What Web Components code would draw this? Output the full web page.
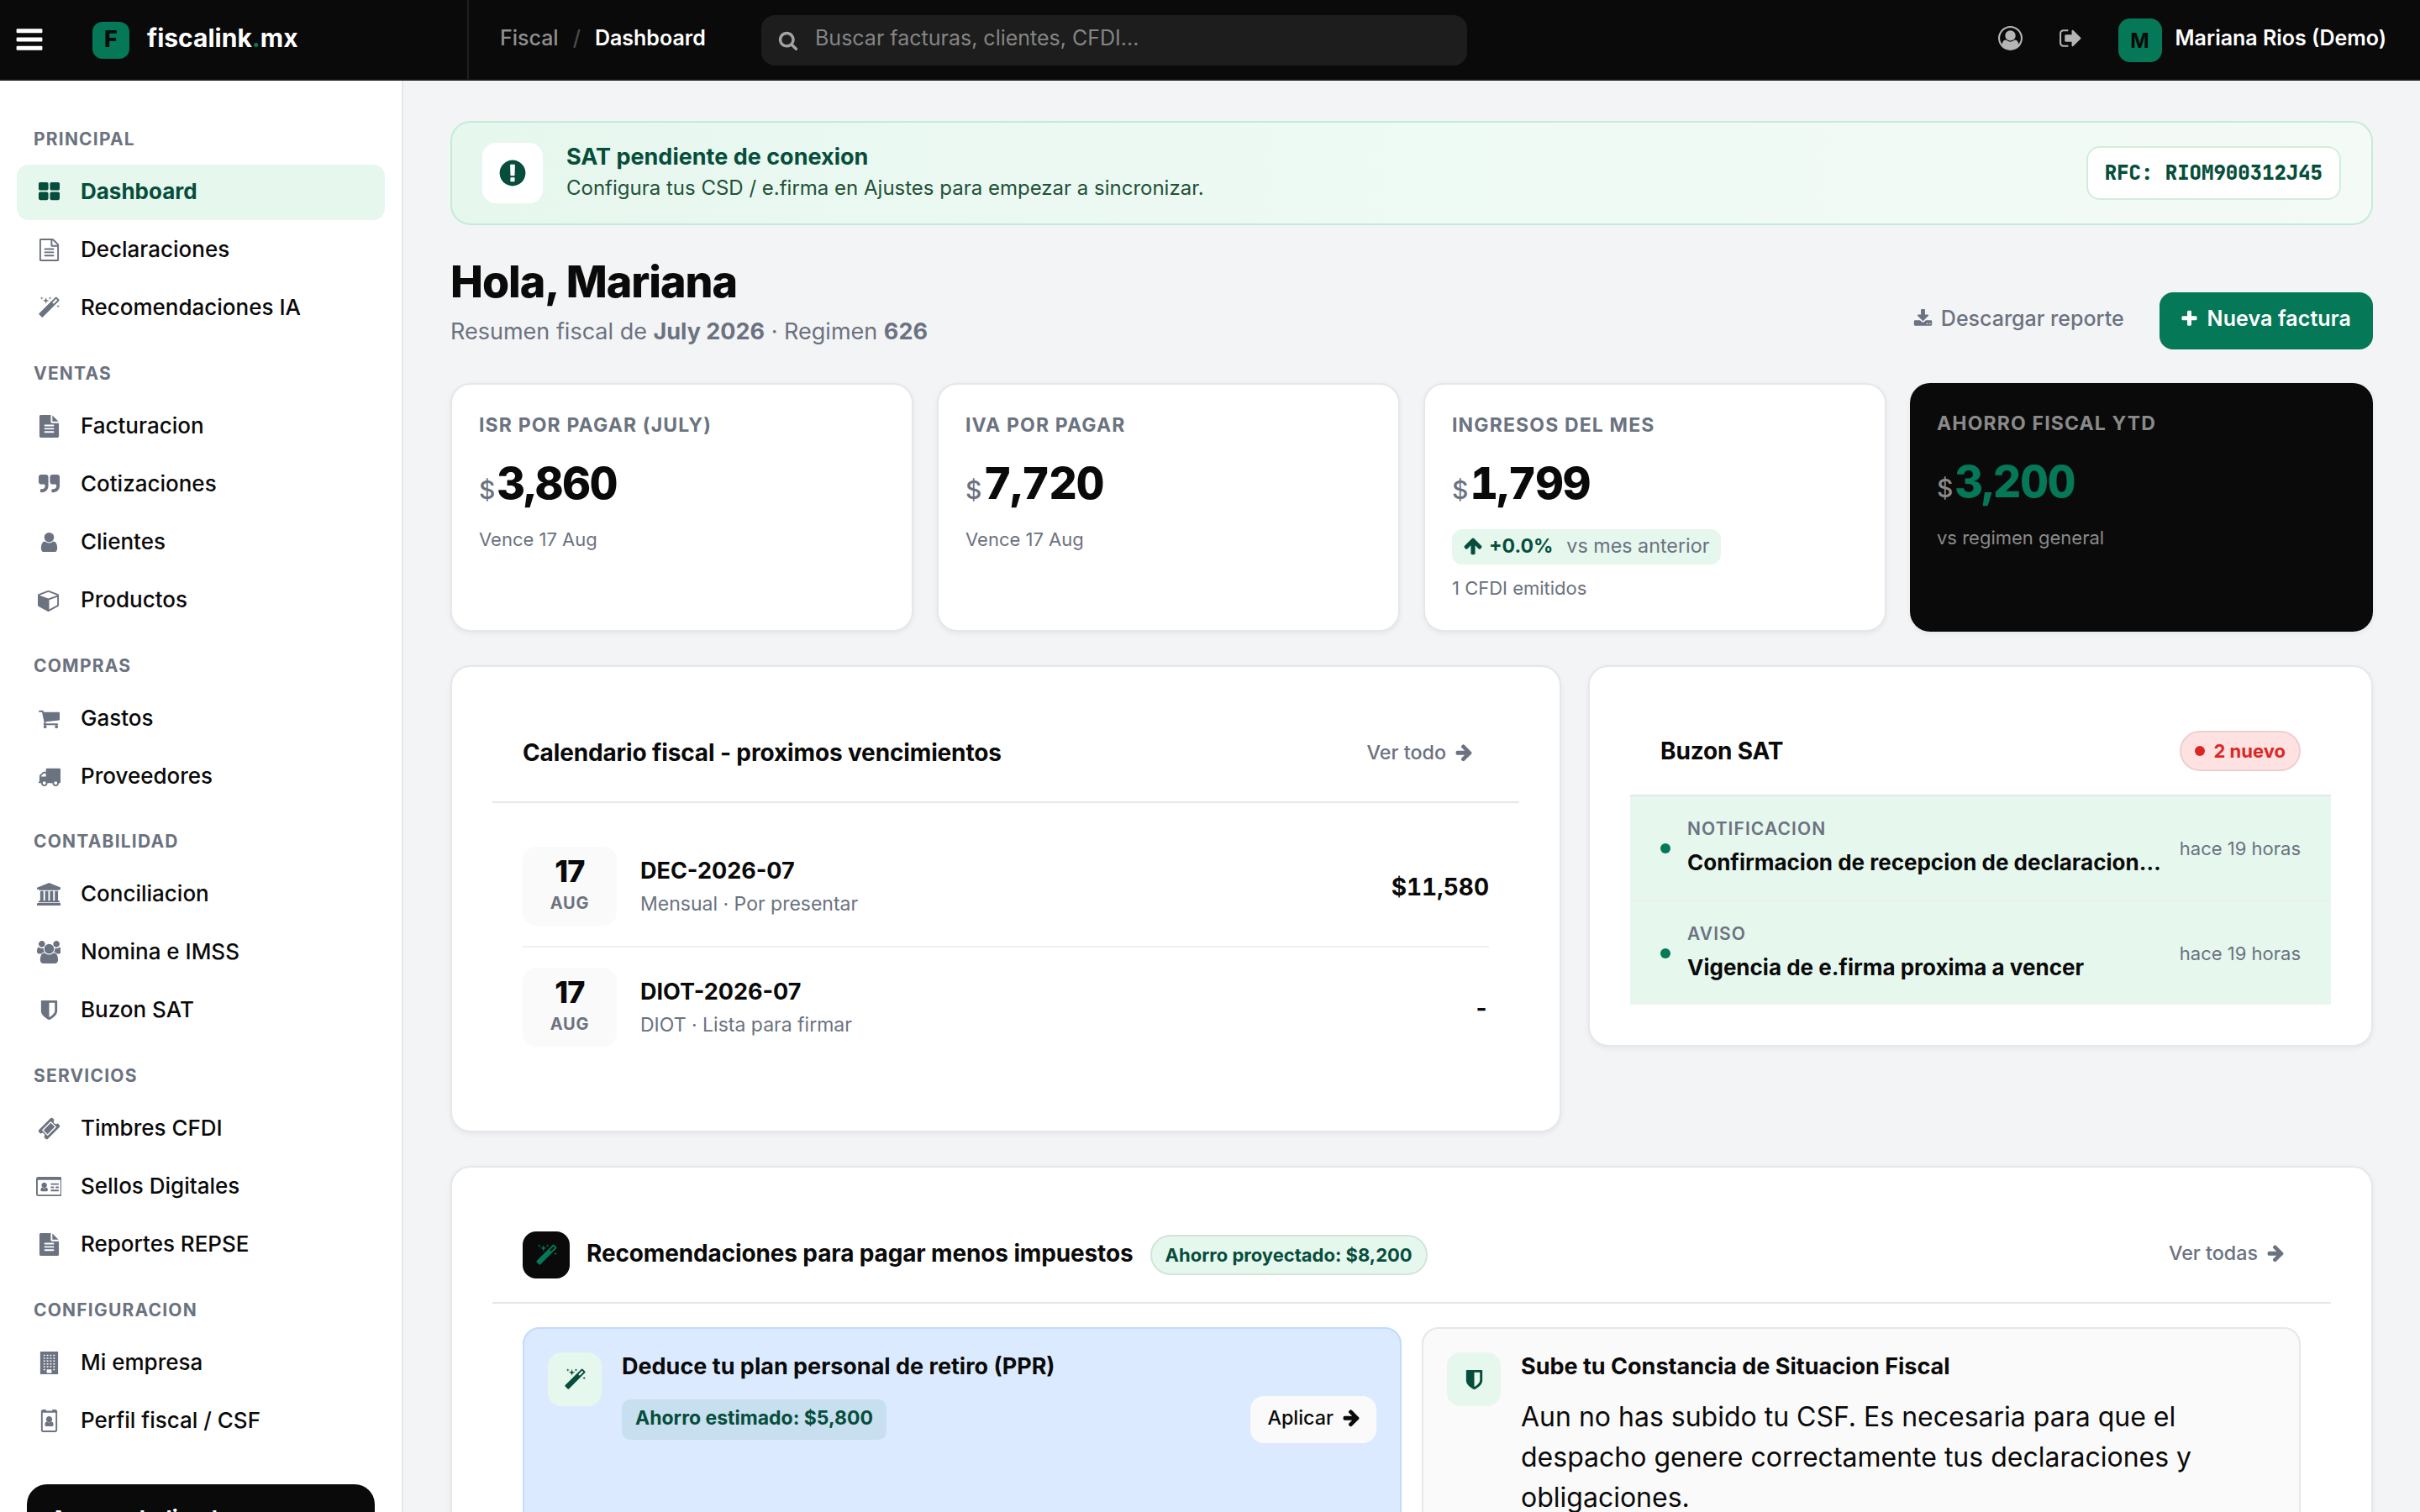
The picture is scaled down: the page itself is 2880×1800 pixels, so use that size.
<!DOCTYPE html>
<html lang="es">
<head>
<meta charset="utf-8">
<title>fiscalink.mx - Dashboard</title>
<style>
    :root {
        --ink: #0a0a0a;
        --muted: #6b7280;
        --line: #e5e7eb;
        --green: #047857;
        --green-dark: #064e3b;
        --green-soft: #e6f7ee;
    }
    html, body {
        margin: 0;
        height: 1800px;
        overflow: hidden;
    }
    body {
        font-family: Inter, "Liberation Sans", sans-serif;
        color: var(--ink);
        background: #f3f4f6;
    }
</style>
</head>
<body>
<app-shell>
    <app-header slot="header" user="Mariana Rios (Demo)" initial="M"></app-header>

    <app-sidebar slot="sidebar">
        <nav-section label="Principal">
            <nav-item icon="th-large" active>Dashboard</nav-item>
            <nav-item icon="file-text-o">Declaraciones</nav-item>
            <nav-item icon="magic">Recomendaciones IA</nav-item>
        </nav-section>
        <nav-section label="Ventas">
            <nav-item icon="file-text">Facturacion</nav-item>
            <nav-item icon="quote-right">Cotizaciones</nav-item>
            <nav-item icon="user">Clientes</nav-item>
            <nav-item icon="cube">Productos</nav-item>
        </nav-section>
        <nav-section label="Compras">
            <nav-item icon="shopping-cart">Gastos</nav-item>
            <nav-item icon="truck">Proveedores</nav-item>
        </nav-section>
        <nav-section label="Contabilidad">
            <nav-item icon="university">Conciliacion</nav-item>
            <nav-item icon="users">Nomina e IMSS</nav-item>
            <nav-item icon="shield">Buzon SAT</nav-item>
        </nav-section>
        <nav-section label="Servicios">
            <nav-item icon="ticket">Timbres CFDI</nav-item>
            <nav-item icon="id-card">Sellos Digitales</nav-item>
            <nav-item icon="file-text">Reportes REPSE</nav-item>
        </nav-section>
        <nav-section label="Configuracion">
            <nav-item icon="building">Mi empresa</nav-item>
            <nav-item icon="id-badge">Perfil fiscal / CSF</nav-item>
        </nav-section>
        <advisor-card slot="footer">Asesor dedicado</advisor-card>
    </app-sidebar>

    <sat-banner rfc="RFC: RIOM900312J45">
        <span slot="title">SAT pendiente de conexion</span>
        Configura tus CSD / e.firma en Ajustes para empezar a sincronizar.
    </sat-banner>

    <page-head>
        <span slot="title">Hola, Mariana</span>
        Resumen fiscal de <b>July 2026</b> · Regimen <b>626</b>
        <ui-button slot="actions" icon="download" variant="ghost">Descargar reporte</ui-button>
        <ui-button slot="actions" icon="plus" variant="primary">Nueva factura</ui-button>
    </page-head>

    <kpi-grid>
        <kpi-card label="ISR por pagar (July)" value="3,860">Vence 17 Aug</kpi-card>
        <kpi-card label="IVA por pagar" value="7,720">Vence 17 Aug</kpi-card>
        <kpi-card label="Ingresos del mes" value="1,799" delta="+0.0%" delta-note="vs mes anterior">1 CFDI emitidos</kpi-card>
        <kpi-card label="Ahorro fiscal YTD" value="3,200" dark>vs regimen general</kpi-card>
    </kpi-grid>

    <panel-row>
        <ui-panel>
            <span slot="title">Calendario fiscal - proximos vencimientos</span>
            <ui-button slot="action" icon-after="arrow-right" variant="link">Ver todo</ui-button>
            <deadline-list>
                <deadline-row day="17" month="Aug" amount="$11,580">
                    <span slot="title">DEC-2026-07</span>Mensual · Por presentar
                </deadline-row>
                <deadline-row day="17" month="Aug" amount="-" last>
                    <span slot="title">DIOT-2026-07</span>DIOT · Lista para firmar
                </deadline-row>
            </deadline-list>
        </ui-panel>
        <ui-panel compact>
            <span slot="title">Buzon SAT</span>
            <ui-badge slot="action" variant="danger" dot>2 nuevo</ui-badge>
            <mail-item kind="Notificacion" time="hace 19 horas">Confirmacion de recepcion de declaracion…</mail-item>
            <mail-item kind="Aviso" time="hace 19 horas" last>Vigencia de e.firma proxima a vencer</mail-item>
        </ui-panel>
    </panel-row>

    <ui-panel icon="magic">
        <span slot="title">Recomendaciones para pagar menos impuestos</span>
        <ui-badge slot="badge">Ahorro proyectado: $8,200</ui-badge>
        <ui-button slot="action" icon-after="arrow-right" variant="link">Ver todas</ui-button>
        <reco-grid>
            <reco-card icon="magic" variant="info" saving="Ahorro estimado: $5,800" action="Aplicar">
                <span slot="title">Deduce tu plan personal de retiro (PPR)</span>
            </reco-card>
            <reco-card icon="shield">
                <span slot="title">Sube tu Constancia de Situacion Fiscal</span>
                Aun no has subido tu CSF. Es necesaria para que el despacho genere correctamente tus declaraciones y obligaciones.
            </reco-card>
        </reco-grid>
    </ui-panel>
</app-shell>

<script>
// name: [view box width, path]; every icon is 1792 units tall
const ICONS = {
    'bars': [1792, 'M1664 1344v128q0 26-19 45t-45 19h-1408q-26 0-45-19t-19-45v-128q0-26 19-45t45-19h1408q26 0 45 19t19 45zm0-512v128q0 26-19 45t-45 19h-1408q-26 0-45-19t-19-45v-128q0-26 19-45t45-19h1408q26 0 45 19t19 45zm0-512v128q0 26-19 45t-45 19h-1408q-26 0-45-19t-19-45v-128q0-26 19-45t45-19h1408q26 0 45 19t19 45z'],
    'search': [1792, 'M1216 832q0-185-131.5-316.5t-316.5-131.5-316.5 131.5-131.5 316.5 131.5 316.5 316.5 131.5 316.5-131.5 131.5-316.5zm512 832q0 52-38 90t-90 38q-54 0-90-38l-343-342q-179 124-399 124-143 0-273.5-55.5t-225-150-150-225-55.5-273.5 55.5-273.5 150-225 225-150 273.5-55.5 273.5 55.5 225 150 150 225 55.5 273.5q0 220-124 399l343 343q37 37 37 90z'],
    'user-circle': [1792, 'M896 0q182 0 348 71t286 191 191 286 71 348q0 181-70.5 347t-190.5 286-286 191.5-349 71.5-349-71-285.5-191.5-190.5-286-71-347.5 71-348 191-286 286-191 348-71zm619 1351q149-205 149-455 0-156-61-298t-164-245-245-164-298-61-298 61-245 164-164 245-61 298q0 250 149 455 66-327 306-327 131 128 313 128t313-128q240 0 306 327zm-235-647q0-159-112.5-271.5t-271.5-112.5-271.5 112.5-112.5 271.5 112.5 271.5 271.5 112.5 271.5-112.5 112.5-271.5z'],
    'sign-out': [1792, 'M704 1440q0 4 1 20t.5 26.5-3 23.5-10 19.5-20.5 6.5h-320q-119 0-203.5-84.5t-84.5-203.5v-704q0-119 84.5-203.5t203.5-84.5h320q13 0 22.5 9.5t9.5 22.5q0 4 1 20t.5 26.5-3 23.5-10 19.5-20.5 6.5h-320q-66 0-113 47t-47 113v704q0 66 47 113t113 47h312l11.5 1 11.5 3 8 5.5 7 9 2 13.5zm928-544q0 26-19 45l-544 544q-19 19-45 19t-45-19-19-45v-288h-448q-26 0-45-19t-19-45v-384q0-26 19-45t45-19h448v-288q0-26 19-45t45-19 45 19l544 544q19 19 19 45z'],
    'th-large': [1792, 'M832 1024v384q0 52-38 90t-90 38h-512q-52 0-90-38t-38-90v-384q0-52 38-90t90-38h512q52 0 90 38t38 90zm0-768v384q0 52-38 90t-90 38h-512q-52 0-90-38t-38-90v-384q0-52 38-90t90-38h512q52 0 90 38t38 90zm896 768v384q0 52-38 90t-90 38h-512q-52 0-90-38t-38-90v-384q0-52 38-90t90-38h512q52 0 90 38t38 90zm0-768v384q0 52-38 90t-90 38h-512q-52 0-90-38t-38-90v-384q0-52 38-90t90-38h512q52 0 90 38t38 90z'],
    'file-text-o': [1792, 'M1596 380q28 28 48 76t20 88v1152q0 40-28 68t-68 28h-1344q-40 0-68-28t-28-68v-1600q0-40 28-68t68-28h896q40 0 88 20t76 48zm-444-244v376h376q-10-29-22-41l-313-313q-12-12-41-22zm384 1528v-1024h-416q-40 0-68-28t-28-68v-416h-768v1536h1280zm-1024-864q0-14 9-23t23-9h704q14 0 23 9t9 23v64q0 14-9 23t-23 9h-704q-14 0-23-9t-9-23v-64zm736 224q14 0 23 9t9 23v64q0 14-9 23t-23 9h-704q-14 0-23-9t-9-23v-64q0-14 9-23t23-9h704zm0 256q14 0 23 9t9 23v64q0 14-9 23t-23 9h-704q-14 0-23-9t-9-23v-64q0-14 9-23t23-9h704z'],
    'file-text': [1792, 'M1596 476q14 14 28 36h-472v-472q22 14 36 28zm-476 164h544v1056q0 40-28 68t-68 28h-1344q-40 0-68-28t-28-68v-1600q0-40 28-68t68-28h800v544q0 40 28 68t68 28zm160 736v-64q0-14-9-23t-23-9h-704q-14 0-23 9t-9 23v64q0 14 9 23t23 9h704q14 0 23-9t9-23zm0-256v-64q0-14-9-23t-23-9h-704q-14 0-23 9t-9 23v64q0 14 9 23t23 9h704q14 0 23-9t9-23zm0-256v-64q0-14-9-23t-23-9h-704q-14 0-23 9t-9 23v64q0 14 9 23t23 9h704q14 0 23-9t9-23z'],
    'magic': [1792, 'M1254 581l293-293-107-107-293 293zm447-293q0 27-18 45l-1286 1286q-18 18-45 18t-45-18l-198-198q-18-18-18-45t18-45l1286-1286q18-18 45-18t45 18l198 198q18 18 18 45zm-1351-190l98 30-98 30-30 98-30-98-98-30 98-30 30-98zm350 162l196 60-196 60-60 196-60-196-196-60 196-60 60-196zm930 478l98 30-98 30-30 98-30-98-98-30 98-30 30-98zm-640-640l98 30-98 30-30 98-30-98-98-30 98-30 30-98z'],
    'quote-right': [1792, 'M832 320v704q0 104-40.5 198.5t-109.5 163.5-163.5 109.5-198.5 40.5h-64q-26 0-45-19t-19-45v-128q0-26 19-45t45-19h64q106 0 181-75t75-181v-32q0-40-28-68t-68-28h-224q-80 0-136-56t-56-136v-384q0-80 56-136t136-56h384q80 0 136 56t56 136zm896 0v704q0 104-40.5 198.5t-109.5 163.5-163.5 109.5-198.5 40.5h-64q-26 0-45-19t-19-45v-128q0-26 19-45t45-19h64q106 0 181-75t75-181v-32q0-40-28-68t-68-28h-224q-80 0-136-56t-56-136v-384q0-80 56-136t136-56h384q80 0 136 56t56 136z'],
    'user': [1792, 'M1536 1399q0 109-62.5 187t-150.5 78h-854q-88 0-150.5-78t-62.5-187q0-85 8.5-160.5t31.5-152 58.5-131 94-89 134.5-34.5q131 128 313 128t313-128q76 0 134.5 34.5t94 89 58.5 131 31.5 152 8.5 160.5zm-256-887q0 159-112.5 271.5t-271.5 112.5-271.5-112.5-112.5-271.5 112.5-271.5 271.5-112.5 271.5 112.5 112.5 271.5z'],
    'cube': [1792, 'M896 1629l640-349v-636l-640 233v752zm-64-865l698-254-698-254-698 254zm832-252v768q0 35-18 65t-49 47l-704 384q-28 16-61 16t-61-16l-704-384q-31-17-49-47t-18-65v-768q0-40 23-73t61-47l704-256q22-8 44-8t44 8l704 256q38 14 61 47t23 73z'],
    'shopping-cart': [1792, 'M704 1536q0 52-38 90t-90 38-90-38-38-90 38-90 90-38 90 38 38 90zm896 0q0 52-38 90t-90 38-90-38-38-90 38-90 90-38 90 38 38 90zm128-1088v512q0 24-16.5 42.5t-40.5 21.5l-1044 122q13 60 13 70 0 16-24 64h920q26 0 45 19t19 45-19 45-45 19h-1024q-26 0-45-19t-19-45q0-11 8-31.5t16-36 21.5-40 15.5-29.5l-177-823h-204q-26 0-45-19t-19-45 19-45 45-19h256q16 0 28.5 6.5t19.5 15.5 13 24.5 8 26 5.5 29.5 4.5 26h1201q26 0 45 19t19 45z'],
    'truck': [1792, 'M640 1408q0-52-38-90t-90-38-90 38-38 90 38 90 90 38 90-38 38-90zm-384-512h384v-256h-158q-13 0-22 9l-195 195q-9 9-9 22v30zm1280 512q0-52-38-90t-90-38-90 38-38 90 38 90 90 38 90-38 38-90zm256-1088v1024q0 15-4 26.5t-13.5 18.5-16.5 11.5-23.5 6-22.5 2-25.5 0-22.5-.5q0 106-75 181t-181 75-181-75-75-181h-384q0 106-75 181t-181 75-181-75-75-181h-64q-3 0-22.5.5t-25.5 0-22.5-2-23.5-6-16.5-11.5-13.5-18.5-4-26.5q0-26 19-45t45-19v-320q0-8-.5-35t0-38 2.5-34.5 6.5-37 14-30.5 22.5-30l198-198q19-19 50.5-32t58.5-13h160v-192q0-26 19-45t45-19h1024q26 0 45 19t19 45z'],
    'university': [1920, 'M960 0l960 384v128h-128q0 26-20.5 45t-48.5 19h-1526q-28 0-48.5-19t-20.5-45h-128v-128zm-704 640h256v768h128v-768h256v768h128v-768h256v768h128v-768h256v768h59q28 0 48.5 19t20.5 45v64h-1664v-64q0-26 20.5-45t48.5-19h59v-768zm1595 960q28 0 48.5 19t20.5 45v128h-1920v-128q0-26 20.5-45t48.5-19h1782z'],
    'users': [1920, 'M593 896q-162 5-265 128h-134q-82 0-138-40.5t-56-118.5q0-353 124-353 6 0 43.5 21t97.5 42.5 119 21.5q67 0 133-23-5 37-5 66 0 159 90 256zm1071 637q0 120-73 189.5t-194 69.5h-874q-121 0-194-69.5t-73-189.5q0-53 3.5-103.5t14-109 26.5-108.5 43-97.5 62-81 85.5-53.5 111.5-20q10 0 43 21.5t73 48 107 48 135 21.5 135-21.5 107-48 73-48 43-21.5q61 0 111.5 20t85.5 53.5 62 81 43 97.5 26.5 108.5 14 109 3.5 103.5zm-1024-1277q0 106-75 181t-181 75-181-75-75-181 75-181 181-75 181 75 75 181zm704 384q0 159-112.5 271.5t-271.5 112.5-271.5-112.5-112.5-271.5 112.5-271.5 271.5-112.5 271.5 112.5 112.5 271.5zm576 225q0 78-56 118.5t-138 40.5h-134q-103-123-265-128 90-97 90-256 0-29-5-66 66 23 133 23 59 0 119-21.5t97.5-42.5 43.5-21q124 0 124 353zm-128-609q0 106-75 181t-181 75-181-75-75-181 75-181 181-75 181 75 75 181z'],
    'shield': [1792, 'M1344 960v-640h-448v1137q119-63 213-137 235-184 235-360zm192-768v768q0 86-33.5 170.5t-83 150-118 127.5-126.5 103-121 77.5-89.5 49.5-42.5 20q-12 6-26 6t-26-6q-16-7-42.5-20t-89.5-49.5-121-77.5-126.5-103-118-127.5-83-150-33.5-170.5v-768q0-26 19-45t45-19h1152q26 0 45 19t19 45z'],
    'ticket': [1792, 'M1024 452l316 316-572 572-316-316zm-211 979l618-618q19-19 19-45t-19-45l-362-362q-18-18-45-18t-45 18l-618 618q-19 19-19 45t19 45l362 362q18 18 45 18t45-18zm889-637l-907 908q-37 37-90.5 37t-90.5-37l-126-126q56-56 56-136t-56-136-136-56-136 56l-125-126q-37-37-37-90.5t37-90.5l907-906q37-37 90.5-37t90.5 37l125 125q-56 56-56 136t56 136 136 56 136-56l126 125q37 37 37 90.5t-37 90.5z'],
    'id-card': [2048, 'M160 128h1728q66 0 113 47t47 113v1216q0 66-47 113t-113 47h-1728q-66 0-113-47t-47-113v-1216q0-66 47-113t113-47zm-32 256v1120q0 32 32 32h1728q32 0 32-32v-1120zm512 192q90 0 153 63t63 153-63 153-153 63-153-63-63-153 63-153 153-63zm-150 400q66 60 150 60t150-60q134 10 134 210 0 94-80 94h-408q-80 0-80-94 0-200 134-210zm694-336h576q32 0 32 32v64q0 32-32 32h-576q-32 0-32-32v-64q0-32 32-32zm0 256h192q32 0 32 32v64q0 32-32 32h-192q-32 0-32-32v-64q0-32 32-32zm384 0h192q32 0 32 32v64q0 32-32 32h-192q-32 0-32-32v-64q0-32 32-32zm-384 256h576q32 0 32 32v64q0 32-32 32h-576q-32 0-32-32v-64q0-32 32-32z'],
    'building': [1792, buildingPath()],
    'id-badge': [1792, 'M416 0h224v64q0 32 32 32h448q32 0 32-32v-64h224q66 0 113 47t47 113v1472q0 66-47 113t-113 47h-960q-66 0-113-47t-47-113v-1472q0-66 47-113t113-47zm-32 256v1376q0 32 32 32h960q32 0 32-32v-1376zm512 272q100 0 170 70t70 170-70 170-170 70-170-70-70-170 70-170 170-70zm-170 440q76 64 170 64t170-64q170 10 170 240 0 120-100 120h-480q-100 0-100-120 0-230 170-240z'],
    'exclamation-circle': [1792, 'M896 128q209 0 385.5 103t279.5 279.5 103 385.5-103 385.5-279.5 279.5-385.5 103-385.5-103-279.5-279.5-103-385.5 103-385.5 279.5-279.5 385.5-103zm128 1247v-190q0-14-9-23.5t-22-9.5h-192q-13 0-23 10t-10 23v190q0 13 10 23t23 10h192q13 0 22-9.5t9-23.5zm-2-344l18-621q0-12-10-18-10-8-24-8h-220q-14 0-24 8-10 6-10 18l17 621q0 10 10 17.5t24 7.5h185q14 0 23.5-7.5t10.5-17.5z'],
    'download': [1792, 'M1344 1344q0-26-19-45t-45-19-45 19-19 45 19 45 45 19 45-19 19-45zm256 0q0-26-19-45t-45-19-45 19-19 45 19 45 45 19 45-19 19-45zm128-224v320q0 40-28 68t-68 28h-1472q-40 0-68-28t-28-68v-320q0-40 28-68t68-28h465l135 136q58 56 136 56t136-56l136-136h464q40 0 68 28t28 68zm-325-569q17 41-14 70l-448 448q-18 19-45 19t-45-19l-448-448q-31-29-14-70 17-39 59-39h256v-448q0-26 19-45t45-19h256q26 0 45 19t19 45v448h256q42 0 59 39z'],
    'plus': [1792, 'M1600 736v192q0 40-28 68t-68 28h-416v416q0 40-28 68t-68 28h-192q-40 0-68-28t-28-68v-416h-416q-40 0-68-28t-28-68v-192q0-40 28-68t68-28h416v-416q0-40 28-68t68-28h192q40 0 68 28t28 68v416h416q40 0 68 28t28 68z'],
    'arrow-up': [1792, 'M1675 971q0 51-37 90l-75 75q-38 38-91 38-54 0-90-38l-294-293v704q0 52-37.5 84.5t-90.5 32.5h-128q-53 0-90.5-32.5t-37.5-84.5v-704l-294 293q-36 38-90 38t-90-38l-75-75q-38-38-38-90 0-53 38-91l651-651q35-37 90-37 54 0 91 37l651 651q37 39 37 91z'],
    'arrow-right': [1792, 'M1600 960q0 54-37 91l-651 651q-39 37-91 37-51 0-90-37l-75-75q-38-38-38-91t38-91l293-293h-704q-52 0-84.5-37.5t-32.5-90.5v-128q0-53 32.5-90.5t84.5-37.5h704l-293-294q-38-36-38-90t38-90l75-75q38-38 90-38 53 0 91 38l651 651q37 35 37 90z']
};

// Facade with a grid of windows and a door
function buildingPath() {
    let d = 'M192 0h1408v1792h-1408z';
    for (let row = 0; row < 6; row++) {
        for (let col = 0; col < 4; col++) {
            if (row === 5 && (col === 1 || col === 2)) continue;
            d += `M${448 + col * 256} ${256 + row * 224}h128v96h-128z`;
        }
    }
    return d + 'M704 1408h384v288h-384z';
}

class BaseElement extends HTMLElement {
    constructor() {
        super();
        this.attachShadow({ mode: 'open' });
    }

    connectedCallback() {
        this.shadowRoot.innerHTML = `<style>:host { display: block; box-sizing: border-box; } * { box-sizing: border-box; } ${this.styles()}</style>${this.markup()}`;
    }

    styles() { return ''; }
    markup() { return '<slot></slot>'; }

    attr(name) {
        return this.getAttribute(name) || '';
    }
}

class FlIcon extends BaseElement {
    styles() {
        return `
            :host { display: inline-flex; flex: none; line-height: 1; }
            svg { display: block; height: 1em; width: auto; fill: currentColor; fill-rule: evenodd; }
        `;
    }

    markup() {
        const [width, path] = ICONS[this.attr('name')];
        return `<svg viewBox="0 0 ${width} 1792" aria-hidden="true"><path d="${path}"/></svg>`;
    }
}

class AppShell extends BaseElement {
    styles() {
        return `
            :host { display: grid; grid-template: 96px 1704px / 480px 2400px; height: 1800px; }
            .top { grid-column: 1 / 3; }
            main { padding: 48px 56px 0; overflow: hidden; }
        `;
    }

    markup() {
        return `
            <div class="top"><slot name="header"></slot></div>
            <slot name="sidebar"></slot>
            <main><slot></slot></main>
        `;
    }
}

class AppHeader extends BaseElement {
    styles() {
        return `
            :host { display: flex; align-items: stretch; height: 96px; background: #0a0a0a; border-bottom: 2px solid #1a1614; color: #fff; }
            .brand { display: flex; align-items: center; width: 558px; padding: 2px 0 0 17px; border-right: 2px solid #1f1f1f; }
            .menu { margin-bottom: 3px; font-size: 36px; }
            .logo { display: flex; align-items: center; justify-content: center; width: 44px; height: 44px; margin-left: 57px; padding-bottom: 3px; border-radius: 12px; background: #047857; color: #0a0a0a; font-size: 27px; font-weight: 800; }
            .name { margin-left: 21px; padding-bottom: 6px; font-size: 30px; font-weight: 700; }
            .name i { font-style: normal; color: #047857; }
            nav { display: flex; gap: 17px; padding: 28px 0 0 37px; width: 348px; font-size: 25px; line-height: 34px; font-weight: 500; color: #8f8f8f; }
            nav .sep { color: #4b4b4b; }
            nav b { font-weight: 600; color: #fff; }
            .search { display: flex; align-items: center; gap: 20px; align-self: flex-start; width: 840px; height: 60px; margin-top: 18px; padding: 0 20px 0 20px; border-radius: 16px; background: #1d1d1d; color: #858585; font-size: 25px; }
            .search span { padding-bottom: 6px; }
            .search fl-icon { margin-bottom: 1px; font-size: 24px; color: #a3a3a3; }
            .user { display: flex; align-items: center; margin-left: auto; padding: 2px 40px 0 0; font-size: 25px; font-weight: 600; }
            .user fl-icon { color: #b5b5b5; padding-bottom: 5px; }
            .avatar { display: flex; align-items: center; justify-content: center; width: 52px; height: 52px; margin: 0 16px 0 42px; border-radius: 14px; background: #047857; color: #0a0a0a; font-size: 24px; font-weight: 700; }
            .who { padding-bottom: 6px; }
        `;
    }

    markup() {
        return `
            <div class="brand">
                <fl-icon class="menu" name="bars"></fl-icon>
                <span class="logo">F</span>
                <span class="name">fiscalink<i>.</i>mx</span>
            </div>
            <nav><span>Fiscal</span><span class="sep">/</span><b>Dashboard</b></nav>
            <div class="search"><fl-icon name="search"></fl-icon><span>Buscar facturas, clientes, CFDI...</span></div>
            <div class="user">
                <fl-icon name="user-circle" style="font-size:29px"></fl-icon>
                <fl-icon name="sign-out" style="font-size:29px;margin-left:43px"></fl-icon>
                <span class="avatar">${this.attr('initial')}</span>
                <span class="who">${this.attr('user')}</span>
            </div>
        `;
    }
}

class AppSidebar extends BaseElement {
    styles() {
        return `
            :host { width: 480px; height: 1704px; padding: 28.2px 20px 0; overflow: hidden; background: #fff; border-right: 2px solid #e5e7eb; }
            ::slotted(advisor-card) { margin: 42.5px 12px 0; }
        `;
    }

    markup() {
        return '<slot></slot><slot name="footer"></slot>';
    }
}

class NavSection extends BaseElement {
    styles() {
        return `
            .label { padding: 29.2px 20px 16.5px; font-size: 21px; line-height: 26px; font-weight: 700; letter-spacing: 1.2px; text-transform: uppercase; color: var(--muted); }
        `;
    }

    markup() {
        return `<div class="label">${this.attr('label')}</div><slot></slot>`;
    }
}

class NavItem extends BaseElement {
    styles() {
        return `
            :host { display: flex; align-items: center; gap: 20px; height: 66px; margin-bottom: 3px; padding: 0 20px; border-radius: 14px; font-size: 26px; font-weight: 500; }
            :host([active]) { background: var(--green-soft); color: var(--green-dark); font-weight: 700; }
            .glyph { display: flex; justify-content: center; width: 36px; font-size: 27px; color: var(--muted); }
            :host([active]) .glyph { color: inherit; }
            .text { padding-bottom: 2px; }
        `;
    }

    markup() {
        return `<span class="glyph"><fl-icon name="${this.attr('icon')}"></fl-icon></span><span class="text"><slot></slot></span>`;
    }
}

class AdvisorCard extends BaseElement {
    styles() {
        return ':host { height: 240px; padding: 25px 28px; border-radius: 24px; background: #0a0a0a; color: #fff; font-size: 26px; line-height: 32px; font-weight: 700; }';
    }
}

class SatBanner extends BaseElement {
    styles() {
        return `
            :host { display: flex; align-items: center; height: 124px; padding: 0 36px; border: 2px solid #c3ecd6; border-radius: 24px; background: linear-gradient(90deg, #e6f7ee, #eefaf4 50%, #f4faf6); }
            .mark { display: flex; align-items: center; justify-content: center; width: 72px; height: 72px; border-radius: 16px; background: #fff; color: var(--green-dark); font-size: 36px; }
            .body { flex: 1; padding: 0 28px; margin-top: -3px; }
            .title { font-size: 27px; line-height: 38px; font-weight: 700; color: var(--green-dark); }
            .text { font-size: 24px; line-height: 36px; color: #1f5138; }
            .rfc { height: 64px; padding: 0 20px; border: 2px solid #d0eedd; border-radius: 16px; background: #fff; color: var(--green-dark); font: 800 24px/59px "JetBrains Mono", "Liberation Mono", monospace; white-space: pre; }
        `;
    }

    markup() {
        return `
            <span class="mark"><fl-icon name="exclamation-circle"></fl-icon></span>
            <div class="body">
                <div class="title"><slot name="title"></slot></div>
                <div class="text"><slot></slot></div>
            </div>
            <span class="rfc">${this.attr('rfc')}</span>
        `;
    }
}

class PageHead extends BaseElement {
    styles() {
        return `
            :host { display: flex; justify-content: space-between; align-items: flex-end; margin: 37px 0 40px; height: 111px; }
            .title { font-size: 52px; line-height: 61px; font-weight: 800; letter-spacing: -1.04px; }
            .sub { margin: 8px 0 0; font-size: 27px; line-height: 42px; color: var(--muted); }
            .actions { display: flex; gap: 4px; }
        `;
    }

    markup() {
        return `
            <div>
                <div class="title"><slot name="title"></slot></div>
                <div class="sub"><slot></slot></div>
            </div>
            <div class="actions"><slot name="actions"></slot></div>
        `;
    }
}

class UiButton extends BaseElement {
    styles() {
        return `
            :host { display: inline-flex; align-items: center; gap: 10px; height: 68px; padding: 0 26px 6px 24px; border-radius: 16px; font-size: 25px; font-weight: 600; white-space: nowrap; }
            :host([variant="primary"]) { background: var(--green); color: #fff; letter-spacing: 0.1px; }
            :host([variant="ghost"]) { padding-right: 38px; color: var(--muted); font-weight: 500; }
            :host([variant="link"]) { gap: 10px; height: 56px; padding: 0 18px 5px 20px; font-size: 23.3px; font-weight: 500; color: var(--muted); }
            :host([variant="soft"]) { gap: 10px; height: 56px; padding: 0 18px 5px 20px; font-size: 23.3px; font-weight: 500; background: #fafafa; color: var(--ink); }
            fl-icon { font-size: 23px; }
        `;
    }

    markup() {
        const before = this.attr('icon') ? `<fl-icon name="${this.attr('icon')}"></fl-icon>` : '';
        const after = this.attr('icon-after') ? `<fl-icon name="${this.attr('icon-after')}"></fl-icon>` : '';
        return `${before}<slot></slot>${after}`;
    }
}

class UiBadge extends BaseElement {
    styles() {
        return `
            :host { display: inline-flex; align-items: center; gap: 11px; height: 48px; padding: 0 16px; border: 2px solid #d0e6da; border-radius: 24px; background: var(--green-soft); color: var(--green-dark); font-size: 22px; font-weight: 700; white-space: nowrap; }
            :host([variant="danger"]) { background: #fee2e2; border-color: #eecfcf; color: #dc2626; }
            .dot { width: 12px; height: 12px; border-radius: 50%; background: currentColor; }
        `;
    }

    markup() {
        return `${this.hasAttribute('dot') ? '<span class="dot"></span>' : ''}<slot></slot>`;
    }
}

class KpiGrid extends BaseElement {
    styles() {
        return ':host { display: grid; grid-template-columns: repeat(4, 1fr); gap: 28px; margin-bottom: 40px; }';
    }
}

class KpiCard extends BaseElement {
    styles() {
        return `
            :host { height: 296px; padding: 32px; border: 2px solid var(--line); border-radius: 24px; background: #fff; box-shadow: 0 2px 6px rgba(0, 0, 0, 0.06); }
            .label { font-size: 23px; line-height: 32px; font-weight: 700; letter-spacing: 1.15px; text-transform: uppercase; color: var(--muted); }
            .value { display: flex; align-items: baseline; gap: 2px; margin-top: 25px; height: 58px; font-size: 52px; line-height: 58px; font-weight: 800; font-variant-numeric: tabular-nums; letter-spacing: -1.1px; }
            .value small { font-size: 30px; font-weight: 500; letter-spacing: 0; color: var(--muted); }
            .delta { display: flex; align-items: center; gap: 7px; width: max-content; height: 42px; margin: 25px 0 -9px; padding: 0 14px 3px 13px; border-radius: 12px; background: var(--green-soft); color: var(--green-dark); font-size: 23px; font-weight: 700; }
            .delta em { margin-left: 9px; font-size: 23.3px; font-style: normal; font-weight: 400; color: var(--muted); }
            .delta fl-icon { font-size: 24px; }
            .foot { margin-top: 20px; font-size: 22px; line-height: 34px; color: var(--muted); }
            :host([dark]) { border: 0; background: var(--ink); }
            :host([dark]) .label, :host([dark]) small, :host([dark]) .foot { color: #8a8a8a; }
            :host([dark]) .value { color: var(--green); }
        `;
    }

    markup() {
        const delta = this.attr('delta')
            ? `<div class="delta"><fl-icon name="arrow-up"></fl-icon>${this.attr('delta')}<em>${this.attr('delta-note')}</em></div>`
            : '';
        return `
            <div class="label">${this.attr('label')}</div>
            <div class="value"><small>$</small><span>${this.attr('value')}</span></div>
            ${delta}
            <div class="foot"><slot></slot></div>
        `;
    }
}

class PanelRow extends BaseElement {
    styles() {
        return ':host { display: grid; grid-template-columns: minmax(0, 1322fr) minmax(0, 934fr); align-items: start; gap: 32px; margin-bottom: 40px; }';
    }
}

class UiPanel extends BaseElement {
    styles() {
        return `
            :host { padding: 48px; border: 2px solid var(--line); border-radius: 24px; background: #fff; box-shadow: 0 2px 6px rgba(0, 0, 0, 0.06); }
            header { display: flex; align-items: center; padding: 28px 36px; border-bottom: 2px solid var(--line); }
            .mark { display: flex; align-items: center; justify-content: center; width: 56px; height: 56px; margin-right: 20px; border-radius: 16px; background: var(--ink); color: var(--green); font-size: 27px; }
            .title { margin-bottom: 4px; font-size: 28px; line-height: 36px; font-weight: 700; letter-spacing: -0.14px; }
            :host([compact]) .title { margin-bottom: 1px; }
            .action { display: flex; margin-left: auto; }
            ::slotted(ui-badge[slot="badge"]) { margin-left: 20px; }
        `;
    }

    markup() {
        const mark = this.attr('icon') ? `<span class="mark"><fl-icon name="${this.attr('icon')}"></fl-icon></span>` : '';
        return `
            <header>
                ${mark}
                <span class="title"><slot name="title"></slot></span>
                <slot name="badge"></slot>
                <span class="action"><slot name="action"></slot></span>
            </header>
            <slot></slot>
        `;
    }
}

class DeadlineList extends BaseElement {
    styles() {
        return ':host { padding: 28px 36px; }';
    }
}

class DeadlineRow extends BaseElement {
    styles() {
        return `
            :host { display: flex; align-items: center; gap: 28px; padding: 24px 0; border-bottom: 2px solid #f0f0f1; }
            :host([last]) { border-bottom: 0; }
            .date { width: 112px; height: 94px; padding-top: 11px; border-radius: 16px; background: #fafafa; text-align: center; }
            .day { font-size: 36px; line-height: 36px; font-weight: 800; letter-spacing: -0.8px; }
            .month { margin-top: 8px; font-size: 20px; line-height: 24px; font-weight: 700; letter-spacing: 0.8px; text-transform: uppercase; color: var(--muted); }
            .body { flex: 1; }
            .title { margin-top: 1px; font-size: 27px; line-height: 40px; font-weight: 700; }
            .sub { margin-top: 1px; font-size: 23px; line-height: 36px; color: var(--muted); }
            .amount { margin-top: 1px; font-size: 28px; font-weight: 700; font-variant-numeric: tabular-nums; }
        `;
    }

    markup() {
        return `
            <div class="date"><div class="day">${this.attr('day')}</div><div class="month">${this.attr('month')}</div></div>
            <div class="body">
                <div class="title"><slot name="title"></slot></div>
                <div class="sub"><slot></slot></div>
            </div>
            <div class="amount">${this.attr('amount')}</div>
        `;
    }
}

class MailItem extends BaseElement {
    styles() {
        return `
            :host { display: flex; align-items: center; padding: 22px 36px; border-bottom: 2px solid #eceff0; background: var(--green-soft); }
            :host([last]) { border-bottom: 0; }
            .dot { flex: none; width: 12px; height: 12px; margin-right: 20px; border-radius: 50%; background: var(--green); }
            .body { flex: 1; min-width: 0; }
            .kind { padding-top: 1px; font-size: 21px; line-height: 32px; font-weight: 600; letter-spacing: 1.1px; text-transform: uppercase; color: var(--muted); }
            .subject { margin-top: 1px; font-size: 26px; line-height: 45px; font-weight: 700; white-space: nowrap; }
            .time { margin-left: 22px; font-size: 22px; color: var(--muted); white-space: nowrap; }
        `;
    }

    markup() {
        return `
            <span class="dot"></span>
            <div class="body">
                <div class="kind">${this.attr('kind')}</div>
                <div class="subject"><slot></slot></div>
            </div>
            <span class="time">${this.attr('time')}</span>
        `;
    }
}

class RecoGrid extends BaseElement {
    styles() {
        return ':host { display: grid; grid-template-columns: 1fr 1fr; gap: 24px; padding: 28px 36px; }';
    }
}

class RecoCard extends BaseElement {
    styles() {
        return `
            :host { display: flex; gap: 24px; min-height: 300px; padding: 28px; border: 2px solid var(--line); border-radius: 20px; background: #fafafa; }
            :host([variant="info"]) { background: #dbeafe; border-color: #bfdbfe; }
            .mark { display: flex; flex: none; align-items: center; justify-content: center; width: 64px; height: 64px; border-radius: 16px; background: var(--green-soft); color: var(--green-dark); font-size: 27px; }
            .body { flex: 1; }
            .title { padding-top: 1px; font-size: 27px; line-height: 32px; font-weight: 700; }
            .text { margin-top: 20px; font-size: 32px; line-height: 48px; }
            .row { display: flex; align-items: center; justify-content: space-between; margin-top: 19px; }
            .saving { height: 48px; padding: 0 16px; border-radius: 10px; background: rgba(4, 120, 87, 0.09); color: var(--green-dark); font-size: 23px; line-height: 44px; font-weight: 700; }
        `;
    }

    markup() {
        const body = this.attr('saving')
            ? `<div class="row"><span class="saving">${this.attr('saving')}</span><ui-button variant="soft" icon-after="arrow-right">${this.attr('action')}</ui-button></div>`
            : '<div class="text"><slot></slot></div>';
        return `
            <span class="mark"><fl-icon name="${this.attr('icon')}"></fl-icon></span>
            <div class="body">
                <div class="title"><slot name="title"></slot></div>
                ${body}
            </div>
        `;
    }
}

customElements.define('fl-icon', FlIcon);
customElements.define('app-shell', AppShell);
customElements.define('app-header', AppHeader);
customElements.define('app-sidebar', AppSidebar);
customElements.define('nav-section', NavSection);
customElements.define('nav-item', NavItem);
customElements.define('advisor-card', AdvisorCard);
customElements.define('sat-banner', SatBanner);
customElements.define('page-head', PageHead);
customElements.define('ui-button', UiButton);
customElements.define('ui-badge', UiBadge);
customElements.define('kpi-grid', KpiGrid);
customElements.define('kpi-card', KpiCard);
customElements.define('panel-row', PanelRow);
customElements.define('ui-panel', UiPanel);
customElements.define('deadline-list', DeadlineList);
customElements.define('deadline-row', DeadlineRow);
customElements.define('mail-item', MailItem);
customElements.define('reco-grid', RecoGrid);
customElements.define('reco-card', RecoCard);
</script>
</body>
</html>
